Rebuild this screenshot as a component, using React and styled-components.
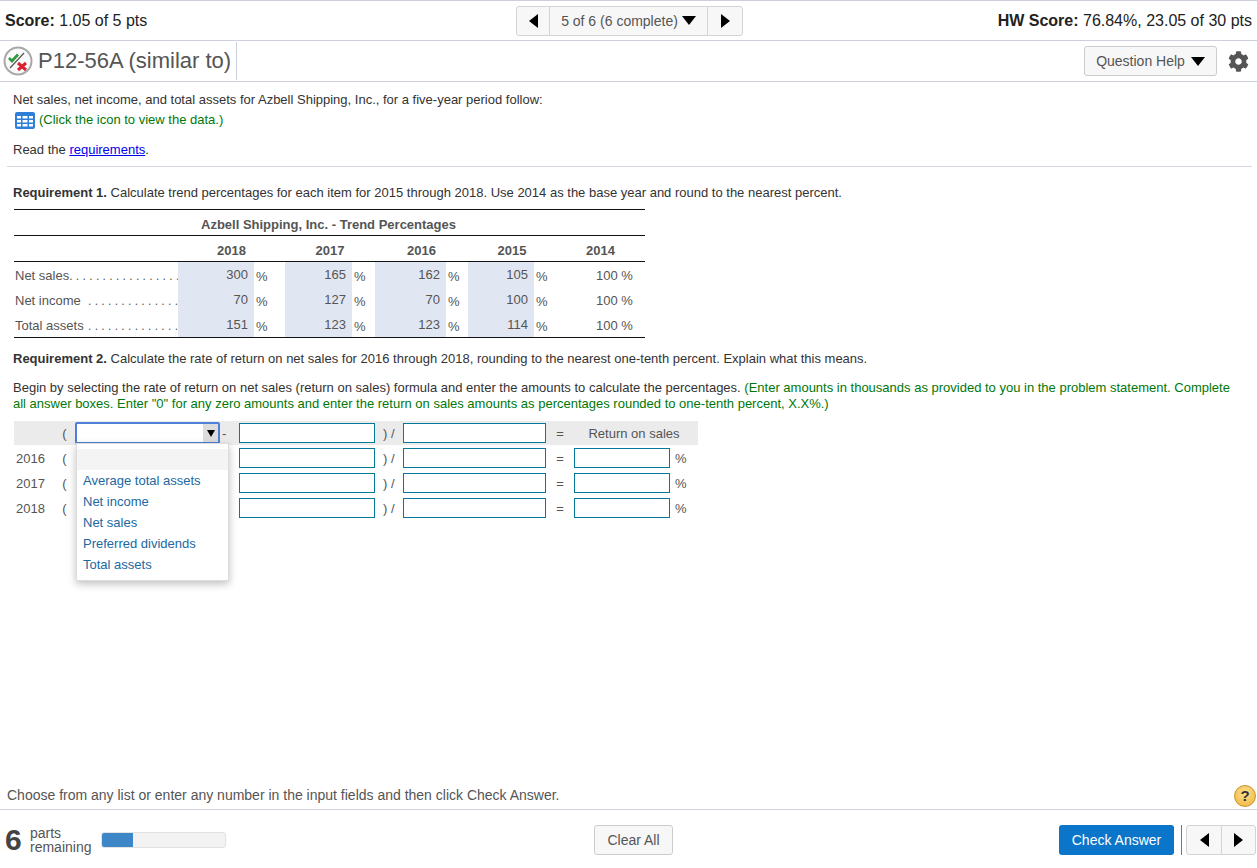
import styled, { createGlobalStyle } from "styled-components";
import { FaCog } from "react-icons/fa";

const GlobalStyle = createGlobalStyle`
html, body {
  margin: 0;
  padding: 0;
  background: #ffffff;
}
body {
  font-family: "Liberation Sans", Arial, sans-serif;
  color: #333333;
  overflow: hidden;
}
* {
  box-sizing: border-box;
}
`;

const trendRows = [
  { label: "Net sales", dots: ". . . . . . . . . . . . . . . . .", values: [300, 165, 162, 105] },
  { label: "Net income", dots: ". . . . . . . . . . . . . .", values: [70, 127, 70, 100] },
  { label: "Total assets", dots: ". . . . . . . . . . . . . .", values: [151, 123, 123, 114] },
];

const years = [2018, 2017, 2016, 2015, 2014];
const shadeWidths = [76, 67, 71, 66];
const options = ["Average total assets", "Net income", "Net sales", "Preferred dividends", "Total assets"];

function StatusIcon() {
  return (
    <svg width="30" height="30" viewBox="0 0 30 30">
      <circle cx="15" cy="15" r="13.5" fill="#fafafa" stroke="#a8a8a8" strokeWidth="2" />
      <path d="M7 22 L21 7" stroke="#555555" strokeWidth="1.2" />
      <path d="M6 12 L9 15 L15 8.5" fill="none" stroke="#2f9a3c" strokeWidth="2.6" />
      <path d="M15 17 L23 24 M23 17 L15 24" stroke="#d8232f" strokeWidth="3" />
    </svg>
  );
}

function GridIcon() {
  return (
    <svg width="20" height="17" viewBox="0 0 20 17">
      <rect width="20" height="17" rx="2" fill="#2f7fd6" />
      <path
        d="M2 4h4v2.5H2zM7.5 4h5v2.5h-5zM14 4h4v2.5h-4zM2 8h4v2.5H2zM7.5 8h5v2.5h-5zM14 8h4v2.5h-4zM2 12h4v2.5H2zM7.5 12h5v2.5h-5zM14 12h4v2.5h-4z"
        fill="#ffffff"
      />
    </svg>
  );
}

export default function App() {
  return (
    <Page>
      <GlobalStyle />
      <ScoreBar>
        <ScoreText>
          <b>Score:</b> 1.05 of 5 pts
        </ScoreText>
        <Pager>
          <PagerButton $width={32}>
            <TriLeft />
          </PagerButton>
          <PagerMiddle>
            5 of 6 (6 complete)
            <TriDown />
          </PagerMiddle>
          <PagerButton $width={34}>
            <TriRight />
          </PagerButton>
        </Pager>
        <HwScore>
          <b>HW Score:</b> 76.84%, 23.05 of 30 pts
        </HwScore>
      </ScoreBar>

      <TitleBar>
        <TitleLeft>
          <StatusIcon />
          <Title>P12-56A (similar to)</Title>
        </TitleLeft>
        <TitleTools>
          <HelpButton>
            Question Help
            <TriDown />
          </HelpButton>
          <FaCog size={21} color="#555555" />
        </TitleTools>
      </TitleBar>

      <Main>
        <Intro>Net sales, net income, and total assets for Azbell Shipping, Inc., for a five-year period follow:</Intro>
        <DataLine>
          <GridIcon />
          <Green>(Click the icon to view the data.)</Green>
        </DataLine>
        <ReadLine>
          Read the <a href="#req">requirements</a>.
        </ReadLine>
        <Rule />

        <Requirement>
          <b>Requirement 1.</b> Calculate trend percentages for each item for 2015 through 2018. Use 2014 as the base year and round to the nearest percent.
        </Requirement>

        <TrendTable>
          <TrendTitle>Azbell Shipping, Inc. - Trend Percentages</TrendTitle>
          <YearRow>
            <span />
            {years.map((y) => (
              <YearCell key={y}>{y}</YearCell>
            ))}
          </YearRow>
          {trendRows.map((row) => (
            <TrendRow key={row.label}>
              <RowLabel>
                {row.label}
                <Dots>{row.dots}</Dots>
              </RowLabel>
              {row.values.map((v, i) => (
                <ValuePair key={i} $shade={shadeWidths[i]}>
                  <ValueCell>{v}</ValueCell>
                  <Percent>%</Percent>
                </ValuePair>
              ))}
              <BaseCell>100 %</BaseCell>
            </TrendRow>
          ))}
        </TrendTable>

        <RequirementTwo>
          <b>Requirement 2.</b> Calculate the rate of return on net sales for 2016 through 2018, rounding to the nearest one-tenth percent. Explain what this means.
        </RequirementTwo>

        <Begin>
          Begin by selecting the rate of return on net sales (return on sales) formula and enter the amounts to calculate the percentages.{" "}
          <Green>
            (Enter amounts in thousands as provided to you in the problem statement. Complete all answer boxes. Enter "0" for any zero amounts and enter the return on sales amounts as percentages rounded to one-tenth percent, X.X%.)
          </Green>
        </Begin>

        <Formula>
          <FormulaRow $head>
            <span />
            <Paren>(</Paren>
            <SelectBox>
              <SelectArrow>
                <TriSmall />
              </SelectArrow>
            </SelectBox>
            <Minus>-</Minus>
            <Field />
            <Over>) /</Over>
            <Field />
            <Equal>=</Equal>
            <ReturnHead>Return on sales</ReturnHead>
          </FormulaRow>
          {[2016, 2017, 2018].map((y) => (
            <FormulaRow key={y}>
              <FormulaYear>{y}</FormulaYear>
              <Paren>(</Paren>
              <span />
              <span />
              <Field />
              <Over>) /</Over>
              <Field />
              <Equal>=</Equal>
              <ResultCell>
                <Field />
                <PercentSign>%</PercentSign>
              </ResultCell>
            </FormulaRow>
          ))}
          <Dropdown>
            <BlankOption />
            {options.map((o) => (
              <Option key={o}>{o}</Option>
            ))}
          </Dropdown>
        </Formula>
      </Main>

      <Hint>
        Choose from any list or enter any number in the input fields and then click Check Answer.
        <HelpBadge>?</HelpBadge>
      </Hint>

      <Footer>
        <Parts>
          <PartsNumber>6</PartsNumber>
          <PartsLabel>
            parts
            <br />
            remaining
          </PartsLabel>
          <Progress>
            <ProgressFill style={{ width: `${(1 / 4) * 100}%` }} />
          </Progress>
        </Parts>
        <ClearAll>Clear All</ClearAll>
        <FooterRight>
          <CheckAnswer>Check Answer</CheckAnswer>
          <Divider />
          <FooterNav>
            <FooterNavButton>
              <TriLeft />
            </FooterNavButton>
            <FooterNavButton>
              <TriRight />
            </FooterNavButton>
          </FooterNav>
        </FooterRight>
      </Footer>
    </Page>
  );
}

const Page = styled.div`
display: flex;
flex-direction: column;
width: 1257px;
height: 868px;
overflow: hidden;
`;

const ScoreBar = styled.div`
display: grid;
grid-template-columns: 516px 227px 1fr;
align-items: center;
height: 41px;
border-top: 1px solid #ccd0dc;
border-bottom: 1px solid #ccd0dc;
padding: 0 5px 0 0;
font-size: 14px;
color: #222222;
`;

const ScoreText = styled.div`
padding-left: 5px;
font-size: 16px;
`;

const HwScore = styled.div`
text-align: right;
font-size: 16px;
`;

const Pager = styled.div`
display: flex;
height: 30px;
border: 1px solid #d4d4d4;
border-radius: 3px;
background: #f7f7f7;
`;

const PagerButton = styled.div`
display: flex;
align-items: center;
justify-content: center;
width: ${(p) => p.$width}px;
`;

const PagerMiddle = styled.div`
display: flex;
flex: 1;
align-items: center;
justify-content: center;
gap: 3px;
border-left: 1px solid #d4d4d4;
border-right: 1px solid #d4d4d4;
font-size: 14px;
color: #555555;
`;

const TriLeft = styled.span`
display: block;
width: 0;
height: 0;
border-top: 7px solid transparent;
border-bottom: 7px solid transparent;
border-right: 9px solid #000000;
`;

const TriRight = styled.span`
display: block;
width: 0;
height: 0;
border-top: 7px solid transparent;
border-bottom: 7px solid transparent;
border-left: 9px solid #000000;
`;

const TriDown = styled.span`
display: block;
width: 0;
height: 0;
margin-left: 1px;
border-left: 7px solid transparent;
border-right: 7px solid transparent;
border-top: 9px solid #000000;
`;

const TriSmall = styled.span`
display: block;
width: 0;
height: 0;
border-left: 4px solid transparent;
border-right: 4px solid transparent;
border-top: 7px solid #000000;
`;

const TitleBar = styled.div`
display: flex;
align-items: center;
justify-content: space-between;
height: 41px;
border-bottom: 1px solid #ccd0dc;
padding: 0 8px 0 3px;
`;

const TitleLeft = styled.div`
display: flex;
align-items: center;
gap: 5px;
height: 38px;
padding-right: 5px;
border-right: 1px solid #ccd0dc;
`;

const Title = styled.h1`
margin: 0;
font-size: 22px;
font-weight: 400;
color: #555555;
`;

const TitleTools = styled.div`
display: flex;
align-items: center;
gap: 11px;
`;

const HelpButton = styled.button`
display: flex;
align-items: center;
justify-content: center;
gap: 5px;
width: 133px;
height: 30px;
padding: 0;
border: 1px solid #cccccc;
border-radius: 3px;
background: #f7f7f7;
font-family: inherit;
font-size: 14px;
color: #555555;
`;

const Main = styled.div`
flex: 1;
padding: 0 5px 0 13px;
font-size: 13px;
`;

const Intro = styled.p`
margin: 11px 0 0 0;
line-height: 14px;
`;

const DataLine = styled.div`
display: flex;
align-items: center;
gap: 4px;
margin: 3px 0 0 2px;
height: 20px;
line-height: 14px;
`;

const Green = styled.span`
color: #00780a;
`;

const ReadLine = styled.p`
margin: 13px 0 0 0;
line-height: 14px;
a {
  color: #0000ee;
}
`;

const Rule = styled.div`
height: 1px;
margin: 9px 0 0 -6px;
background: #d5d7e0;
`;

const Requirement = styled.p`
margin: 19px 0 0 0;
line-height: 14px;
`;

const TrendTable = styled.div`
width: 631px;
margin: 9px 0 0 1px;
border-top: 1px solid #111111;
border-bottom: 1px solid #111111;
color: #555555;
`;

const TrendTitle = styled.div`
height: 26px;
border-bottom: 1px solid #111111;
padding-right: 2px;
line-height: 29px;
text-align: center;
font-weight: 700;
`;

const YearRow = styled.div`
display: grid;
grid-template-columns: 164px 107px 90px 93px 88px 89px;
height: 26px;
border-bottom: 1px solid #111111;
`;

const YearCell = styled.div`
line-height: 29px;
text-align: center;
font-weight: 700;
`;

const TrendRow = styled.div`
display: grid;
grid-template-columns: 164px 107px 90px 93px 88px 89px;
grid-template-rows: 25px;
height: 25px;
`;

const RowLabel = styled.div`
display: flex;
height: 25px;
padding-left: 1px;
line-height: 28px;
white-space: nowrap;
overflow: hidden;
`;

const Dots = styled.span`
flex: 1;
font-size: 12px;
text-align: right;
overflow: hidden;
`;

const ValuePair = styled.div`
display: grid;
grid-template-columns: ${(p) => p.$shade}px 1fr;
grid-template-rows: 25px;
`;

const ValueCell = styled.div`
padding-right: 6px;
background: #e1e7f2;
line-height: 26px;
text-align: right;
`;

const Percent = styled.div`
height: 25px;
padding-left: 2px;
line-height: 29px;
`;

const BaseCell = styled.div`
height: 25px;
padding-left: 40px;
line-height: 28px;
white-space: nowrap;
`;

const RequirementTwo = styled.p`
margin: 14px 0 0 0;
line-height: 14px;
`;

const Begin = styled.p`
margin: 14px 0 0 0;
padding-right: 12px;
line-height: 16px;
`;

const Formula = styled.div`
position: relative;
width: 684px;
margin: 9px 0 0 1px;
color: #555555;
`;

const FormulaRow = styled.div`
display: grid;
grid-template-columns: 46px 15px 145px 19px 136px 28px 143px 28px 124px;
align-items: center;
height: ${(p) => (p.$head ? 24 : 25)}px;
background: ${(p) => (p.$head ? "#ebebeb" : "transparent")};
padding-top: ${(p) => (p.$head ? 0 : 1)}px;
`;

const FormulaYear = styled.div`
padding-left: 2px;
`;

const Paren = styled.span`
text-align: center;
padding-right: 6px;
`;

const SelectBox = styled.div`
display: flex;
justify-content: flex-end;
height: 22px;
border: 2px solid #4f7fd8;
border-radius: 2px;
background: #ffffff;
`;

const SelectArrow = styled.div`
display: flex;
align-items: center;
justify-content: center;
width: 15px;
background: #dcdcdc;
`;

const Minus = styled.span`
padding-left: 2px;
`;

const Field = styled.div`
width: 100%;
height: 20px;
border: 1px solid #06789a;
background: #ffffff;
`;

const Over = styled.span`
padding-left: 8px;
`;

const Equal = styled.span`
text-align: center;
`;

const ReturnHead = styled.span`
text-align: center;
padding-right: 4px;
`;

const ResultCell = styled.div`
display: grid;
grid-template-columns: 96px 1fr;
align-items: center;
`;

const PercentSign = styled.span`
padding-left: 5px;
`;

const Dropdown = styled.div`
position: absolute;
top: 22px;
left: 62px;
width: 153px;
height: 138px;
padding-top: 5px;
border: 1px solid #dddddd;
background: #ffffff;
box-shadow: 0 3px 8px rgba(0, 0, 0, 0.25);
`;

const BlankOption = styled.div`
height: 21px;
background: #f4f4f4;
`;

const Option = styled.div`
height: 21px;
padding-left: 6px;
line-height: 21px;
color: #20689f;
`;

const Hint = styled.div`
display: flex;
align-items: center;
justify-content: space-between;
height: 29px;
border-bottom: 1px solid #d2d2da;
padding: 0 1px 0 7px;
font-size: 14px;
color: #555555;
`;

const HelpBadge = styled.span`
display: flex;
align-items: center;
justify-content: center;
width: 22px;
height: 22px;
margin-top: 1px;
border: 1px solid #c9932c;
border-radius: 50%;
background: radial-gradient(circle at 50% 35%, #fde08c, #efb23c);
font-size: 15px;
font-weight: 700;
color: #333333;
`;

const Footer = styled.div`
display: grid;
grid-template-columns: 594px 465px 1fr;
align-items: center;
height: 58px;
padding-top: 1px;
`;

const Parts = styled.div`
display: flex;
align-items: center;
`;

const PartsNumber = styled.span`
width: 30px;
padding-left: 5px;
font-size: 30px;
font-weight: 700;
color: #444444;
`;

const PartsLabel = styled.span`
width: 71px;
font-size: 14px;
line-height: 14px;
color: #555555;
`;

const Progress = styled.div`
width: 125px;
height: 16px;
border: 1px solid #e2e2e2;
border-radius: 3px;
background: #f2f2f2;
overflow: hidden;
`;

const ProgressFill = styled.div`
height: 100%;
background: #3d87c9;
`;

const ClearAll = styled.button`
width: 79px;
height: 30px;
padding: 0;
border: 1px solid #cccccc;
border-radius: 3px;
background: #f7f7f7;
font-family: inherit;
font-size: 14px;
color: #555555;
`;

const FooterRight = styled.div`
display: flex;
align-items: center;
`;

const CheckAnswer = styled.button`
width: 115px;
height: 30px;
padding: 0;
border: none;
border-radius: 3px;
background: #0b76c9;
font-family: inherit;
font-size: 14px;
color: #ffffff;
`;

const Divider = styled.div`
width: 1px;
height: 30px;
margin: 0 4px 0 7px;
background: #777777;
`;

const FooterNav = styled.div`
display: flex;
height: 30px;
border: 1px solid #d4d4d4;
border-radius: 3px;
background: #f7f7f7;
`;

const FooterNavButton = styled.div`
display: flex;
align-items: center;
justify-content: center;
width: 34px;
& + & {
  border-left: 1px solid #d4d4d4;
}
`;
